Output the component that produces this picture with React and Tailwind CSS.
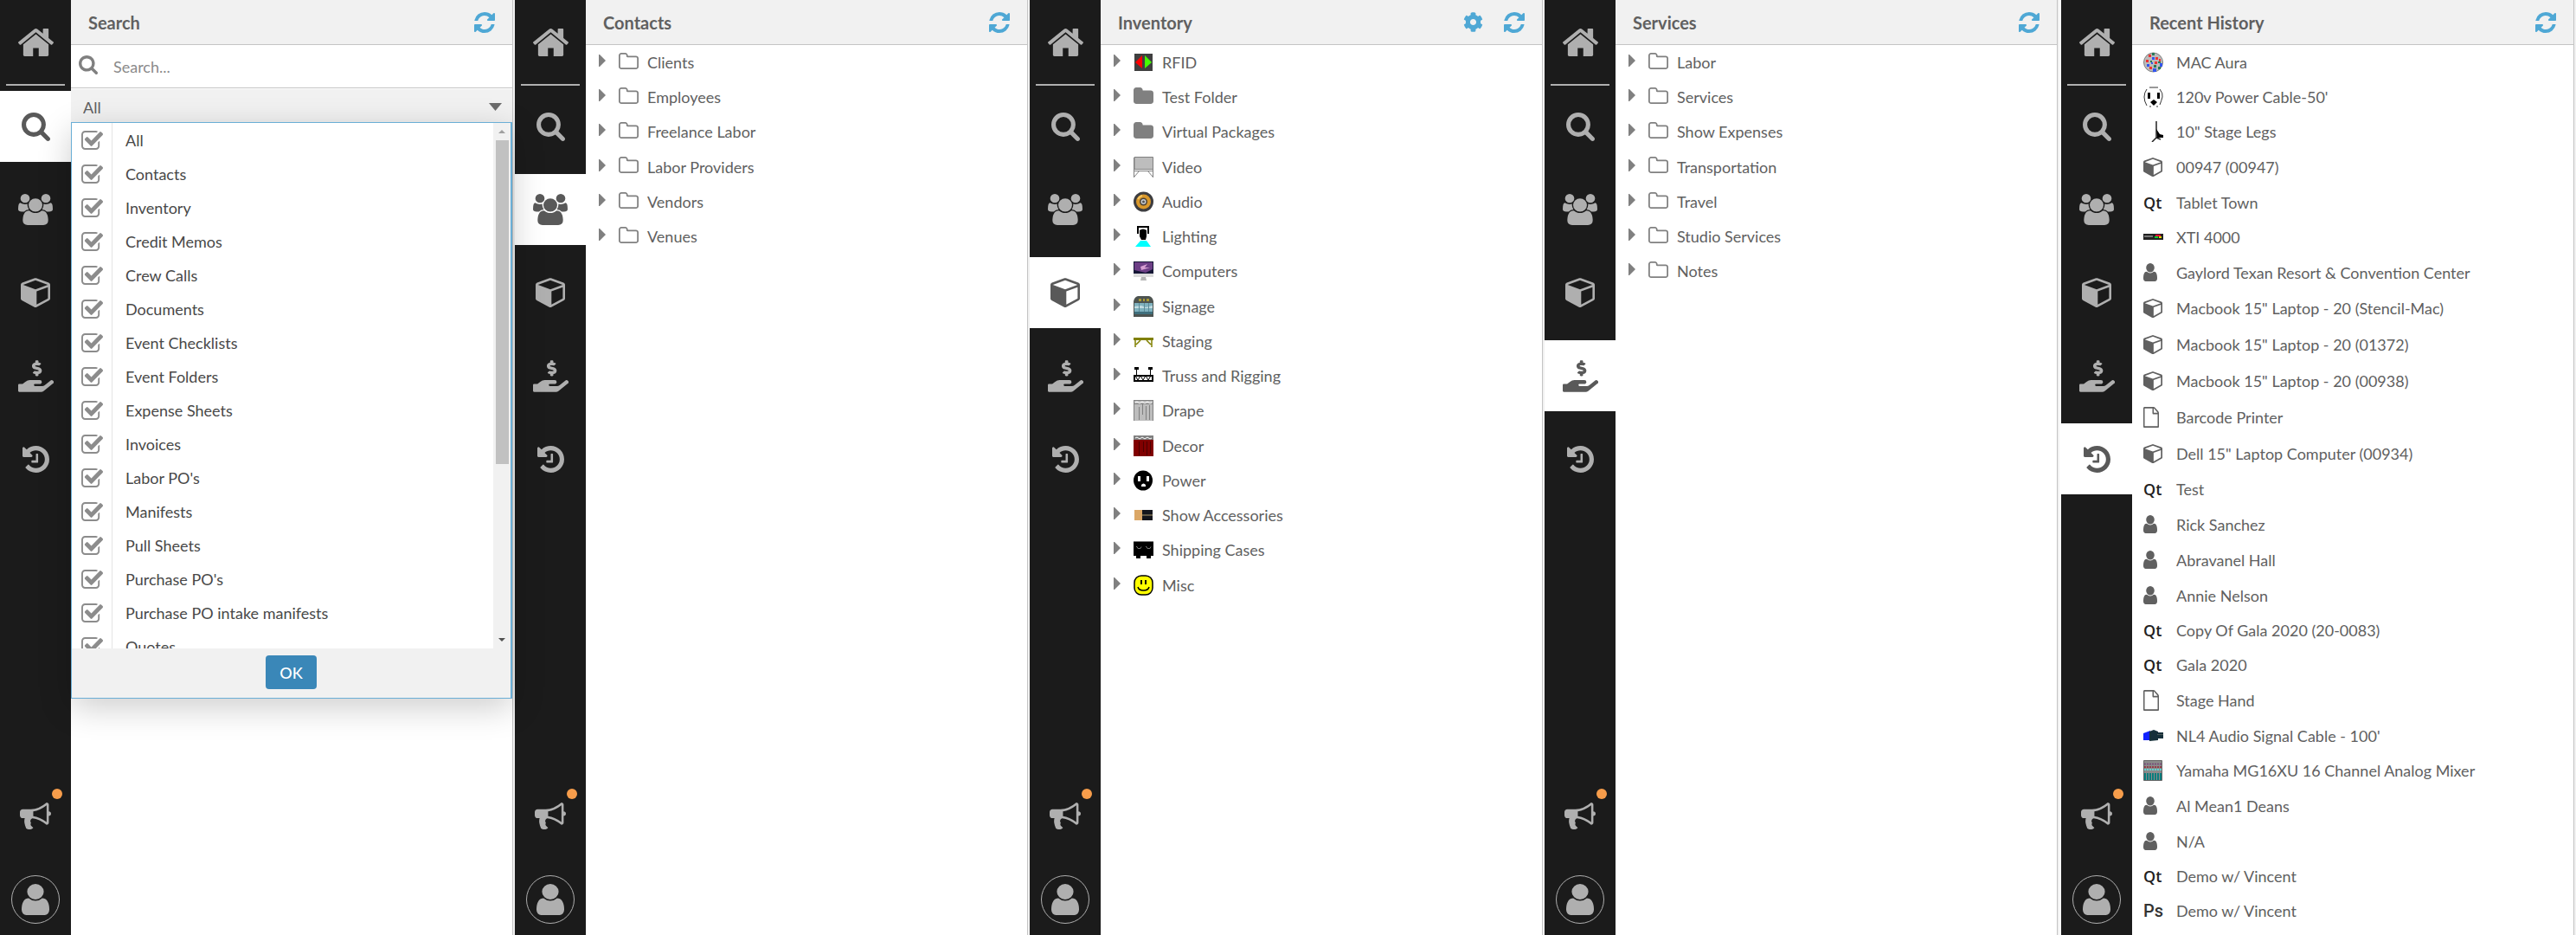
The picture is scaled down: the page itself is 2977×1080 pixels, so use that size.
import { FaHandHoldingUsd, FaCog } from "react-icons/fa";

const glyphs = {
  home: {
    box: "89 253 1614 1283",
    d: "M1472 992v480q0 26-19 45t-45 19h-384v-384h-256v384h-384q-26 0-45-19t-19-45v-480q0-1 .5-3t.5-3l575-474 575 474q1 2 1 6zm223-69l-62 74q-8 9-21 11h-3q-13 0-21-7l-692-577-692 577q-12 8-24 7-13-2-21-11l-62-74q-8-10-7-23.5t11-21.5l719-599q32-26 76-26t76 26l244 204v-195q0-14 9-23t23-9h192q14 0 23 9t9 23v408l219 182q10 8 11 21.5t-7 23.5z",
  },
  search: {
    box: "0 0 1664 1664",
    d: "M1152 704q0-185-131.500-316.500t-316.500-131.500-316.500 131.500-131.500 316.500 131.500 316.500 316.500 131.500 316.500-131.500 131.500-316.500zm512 832q0 52-38 90t-90 38q-54 0-90-38l-343-342q-179 124-399 124-143 0-273.500-55.500t-225-150-150-225-55.500-273.500 55.500-273.500 150-225 225-150 273.500-55.500 273.500 55.500 225 150 150 225 55.500 273.500q0 220-124 399l343 343q37 37 37 90z",
  },
  users: {
    box: "0 0 1920 1792",
    d: "M593 896q-162 5-265 128h-134q-82 0-138-40.5t-56-118.5q0-353 124-353 6 0 43.500 21t97.500 42.500 119 21.500q67 0 133-23-5 37-5 66 0 139 81 256zm1071 637q0 120-73 189.500t-194 69.500h-874q-121 0-194-69.500t-73-189.500q0-53 3.500-103.500t14-109 26.500-108.500 43-97.500 62-81 85.500-53.500 111.500-20q10 0 43 21.500t73 48 107 48 135 21.500 135-21.500 107-48 73-48 43-21.500q61 0 111.500 20t85.500 53.500 62 81 43 97.500 26.500 108.500 14 109 3.500 103.500zm-1024-1277q0 106-75 181t-181 75-181-75-75-181 75-181 181-75 181 75 75 181zm704 384q0 159-112.500 271.500t-271.500 112.500-271.500-112.500-112.500-271.500 112.500-271.500 271.500-112.500 271.500 112.500 112.500 271.500zm576 225q0 78-56 118.500t-138 40.500h-134q-103-123-265-128 81-117 81-256 0-29-5-66 66 23 133 23 59 0 119-21.500t97.500-42.500 43.500-21q124 0 124 353zm-128-609q0 106-75 181t-181 75-181-75-75-181 75-181 181-75 181 75 75 181z",
  },
  cube: {
    box: "0 120 1664 1664",
    d: "M896 1629l640-349v-636l-640 233v752zm-64-865l698-254-698-254-698 254zm832-252v768q0 35-18 65t-49 47l-704 384q-28 16-61 16t-61-16l-704-384q-31-17-49-47t-18-65v-768q0-40 23-73t61-47l704-256q22-8 44-8t44 8l704 256q38 14 61 47t23 73z",
  },
  history: {
    box: "0 128 1536 1536",
    d: "M1536 896q0 156-61 298t-164 245-245 164-298 61q-172 0-327-72.500t-264-204.500q-7-10-6.500-22.500t8.500-20.500l137-138q10-9 25-9 16 2 23 12 73 95 179 147t225 52q104 0 198.500-40.500t163.500-109.500 109.500-163.500 40.500-198.500-40.500-198.500-109.500-163.500-163.500-109.500-198.500-40.500q-98 0-188 35.500t-160 101.500l137 138q31 30 14 69-17 40-59 40h-448q-26 0-45-19t-19-45v-448q0-42 40-59 39-17 69 14l130 129q107-101 244.500-156.500t284.500-55.500q156 0 298 61t245 164 164 245 61 298zm-640-288v448q0 14-9 23t-23 9h-320q-14 0-23-9t-9-23v-64q0-14 9-23t23-9h224v-352q0-14 9-23t23-9h64q14 0 23 9t9 23z",
  },
  bullhorn: {
    box: "0 128 1792 1536",
    d: "M1664 640q53 0 90.500 37.500t37.500 90.500-37.500 90.500-90.500 37.500v384q0 52-38 90t-90 38q-417-347-812-380-58 19-91 66t-31 100.500 40 92.500q-20 33-23 65.500t6 58 33.500 55 48 50 61.500 50.500q-29 58-111.500 83t-168.500 11.500-132-55.500q-7-23-29.500-87.500t-32-94.500-23-89-15-101 3.500-98.500 22-110.500h-122q-66 0-113-47t-47-113v-192q0-66 47-113t113-47h480q435 0 896-384 52 0 90 38t38 90v384zm-128 604v-954q-394 302-768 343v270q377 42 768 341z",
  },
  refresh: {
    box: "128 128 1536 1536",
    d: "M1639 1056q0 5-1 7-64 268-268 434.500t-478 166.500q-146 0-282.500-55t-243.500-157l-129 129q-19 19-45 19t-45-19-19-45v-448q0-26 19-45t45-19h448q26 0 45 19t19 45-19 45l-137 137q71 66 161 102t187 36q134 0 250-65t186-179q11-17 53-117 8-23 30-23h192q13 0 22.500 9.500t9.500 22.500zm25-800v448q0 26-19 45t-45 19h-448q-26 0-45-19t-19-45 19-45l138-138q-148-137-349-137-134 0-250 65t-186 179q-11 17-53 117-8 23-30 23h-199q-13 0-22.500-9.500t-9.500-22.500v-7q65-268 270-434.500t480-166.500q146 0 284 55.500t245 156.500l130-129q19-19 45-19t45 19 19 45z",
  },
  folderOpen: {
    box: "0 128 1664 1408",
    d: "M1536 1312v-704q0-40-28-68t-68-28h-704q-40 0-68-28t-28-68v-64q0-40-28-68t-68-28h-320q-40 0-68 28t-28 68v960q0 40 28 68t68 28h1216q40 0 68-28t28-68zm128-704v704q0 92-66 158t-158 66h-1216q-92 0-158-66t-66-158v-960q0-92 66-158t158-66h320q92 0 158 66t66 158v32h672q92 0 158 66t66 158z",
  },
  folder: {
    box: "0 128 1664 1408",
    d: "M1664 608v704q0 92-66 158t-158 66h-1216q-92 0-158-66t-66-158v-960q0-92 66-158t158-66h320q92 0 158 66t66 158v32h672q92 0 158 66t66 158z",
  },
  file: {
    box: "128 0 1536 1792",
    d: "M1596 380q28 28 48 76t20 88v1152q0 40-28 68t-68 28h-1344q-40 0-68-28t-28-68v-1600q0-40 28-68t68-28h896q40 0 88 20t76 48zm-444-244v376h376q-10-29-22-41l-313-313q-12-12-41-22zm384 1528v-1024h-416q-40 0-68-28t-28-68v-416h-768v1536h1280z",
  },
  user: {
    box: "256 128 1280 1536",
    d: "M1536 1399q0 109-62.500 187t-150.500 78h-854q-88 0-150.500-78t-62.500-187q0-85 8.500-160.500t31.500-152 58.500-131 94-89 134.500-34.500q131 128 313 128t313-128q76 0 134.500 34.500t94 89 58.500 131 31.500 152 8.500 160.500zm-256-887q0 159-112.500 271.500t-271.500 112.500-271.500-112.500-112.500-271.500 112.500-271.500 271.500-112.500 271.500 112.500 112.500 271.500z",
  },
  check: {
    box: "64 128 1663 1408",
    d: "M1472 930v318q0 119-84.500 203.500t-203.500 84.500h-832q-119 0-203.500-84.500t-84.500-203.500v-832q0-119 84.500-203.500t203.500-84.500h832q63 0 117 25 15 7 18 23 3 17-9 29l-49 49q-10 10-23 10-3 0-9-2-23-6-45-6h-832q-66 0-113 47t-47 113v832q0 66 47 113t113 47h832q66 0 113-47t47-113v-254q0-13 9-22l64-64q10-10 23-10 6 0 12 3 20 8 20 29zm231-489l-814 814q-24 24-57 24t-57-24l-430-430q-24-24-24-57t24-57l110-110q24-24 57-24t57 24l263 263 647-647q24-24 57-24t57 24l110 110q24 24 24 57t-24 57z",
  },
};

function Glyph({ name, className }) {
  const { box, d } = glyphs[name];
  return (
    <svg viewBox={box} preserveAspectRatio="none" fill="currentColor" className={className} aria-hidden="true">
      <path d={d} />
    </svg>
  );
}

// Small colour pictures, all on a 24x24 grid
const pictures = {
  rfid: (
    <>
      <path fill="#404040" d="M1 2h21v20H1z" />
      <path fill="#f00" d="M10 4v15L2 12z" />
      <path fill="#4f0" d="M13 4v15l8-7z" />
    </>
  ),
  video: (
    <>
      <path fill="#bdbdbd" stroke="#808080" d="M1 .5h21.500v14H1z" />
      <path fill="none" stroke="#808080" d="M.5 1v23M22.500 1v23M1 16.500h22M7 16l-6 7M16 16l6 7" />
    </>
  ),
  audio: (
    <>
      <circle cx="11.500" cy="12" r="11.500" fill="#3d3d40" />
      <circle cx="11.500" cy="12" r="8.500" fill="#d9982b" />
      <path fill="none" stroke="#f4c766" strokeWidth="2" d="M5 9a8 8 0 0 1 5-4" />
      <circle cx="11.500" cy="12" r="4.500" fill="#4a4136" />
      <circle cx="11.500" cy="12" r="3" fill="#c9ccd0" />
      <circle cx="11.500" cy="12" r="1.500" fill="#555" />
    </>
  ),
  lighting: (
    <>
      <path fill="none" stroke="#000" strokeWidth="2" d="M5 9V1h12v8" />
      <path d="M7 5q4-3 8 0v7l-1 4H9l-2-4z" />
      <path fill="#0ff" d="M8 17h7l5 7H2z" />
    </>
  ),
  computers: (
    <>
      <path fill="#151736" d="M0 1h23v17H0z" />
      <path fill="#6d3f86" d="M1 2h21v8l-8 4-13-3z" />
      <path fill="#d7a0d2" d="M8 7l8-3-3 4 6 0-10 3z" />
      <path fill="#dcdcdc" d="M0 15h23v4H0z" />
      <path fill="#b5b5b5" d="M9 19h5l1 4H8z" />
    </>
  ),
  signage: (
    <>
      <path fill="#4d5350" d="M0 24V6q1-5 5-6h13q4 1 5 6v18z" />
      <path fill="#a99a35" d="M6 3h3v3H6zM11 3h2v3h-2zM15 3h3v3h-3z" />
      <path fill="#7fb2bf" d="M1 8h21v10H1z" />
      <path fill="#c3dde2" d="M1 12l8-1 5 2 8-2v3H1z" />
      <path stroke="#5d8b98" d="M6.500 8v10M12.500 8v10M17.500 8v10" />
      <path fill="#3f6f7d" d="M1 18h21v3H1z" />
    </>
  ),
  staging: (
    <>
      <path fill="#808000" d="M0 8h23v3H0z" />
      <path fill="none" stroke="#808000" strokeWidth="1.500" d="M2 11v8M21 11v8M3 16l5-5M20 16l-5-5" />
    </>
  ),
  truss: (
    <>
      <path d="M1 2h5v3H1zM17 2h5v3h-5z" />
      <path stroke="#000" d="M3.500 4v8M19.500 4v8" />
      <path fill="#fff" stroke="#000" strokeWidth="2" d="M1 12h21v6H1z" />
      <path fill="none" stroke="#000" d="M2 12l3 5 3-5 3 5 3-5 3 5 3-5" />
    </>
  ),
  drape: (
    <>
      <path fill="#bdbdbd" d="M0 0h23v24H0z" />
      <path fill="none" stroke="#808080" d="M0 .5h23M0 4.500h23M.5 0v24M6.500 8v15M10.500 5v12M14.500 7v16M18.500 6v17M22.500 0v24" />
      <path fill="none" stroke="#fff" d="M2 3l2-1 3 2 3-2 3 2 3-2 3 2 2-1" />
    </>
  ),
  decor: (
    <>
      <path fill="#800000" d="M0 5h23v19H0z" />
      <path fill="#808080" d="M0 0h23v5H0z" />
      <path fill="none" stroke="#fff" d="M2 3l2-1 3 2 3-2 3 2 3-2 3 2 2-1" />
      <path fill="none" stroke="#4d0000" d="M6.500 7v16M11.500 7v12M15.500 7v16M19.500 7v14" />
    </>
  ),
  power: (
    <>
      <ellipse cx="11" cy="12" rx="11" ry="11.500" />
      <path fill="#fff" d="M5 7h3v6H5zM15 7h3v6h-3zM9 19v-2q2.500-3 5 0v2z" />
    </>
  ),
  accessories: (
    <>
      <path fill="#dba766" d="M1 6h10v12H1z" />
      <path fill="#15161c" d="M10 6h12v12H10z" />
      <path stroke="#b09a6c" d="M10 12h12" />
    </>
  ),
  cases: (
    <>
      <path d="M0 2h23v17H0zM3 19h5v3H3zM15 19h5v3h-5z" />
      <path fill="none" stroke="#777" d="M0 2.500h23M3 8.500h1l1 2h3l1-2M14 8.500h1l1 2h3l1-2" />
    </>
  ),
  misc: (
    <>
      <rect x="1" y="1" width="21" height="22" rx="8" fill="#ff0" stroke="#000" strokeWidth="1.500" />
      <path d="M8 6h2v5H8zM13 6h2v5h-2z" />
      <path fill="none" stroke="#000" strokeWidth="1.500" d="M5 14q1 4 6.500 4t6.500-4" />
    </>
  ),
  aura: (
    <>
      <circle cx="11.500" cy="12" r="11" fill="#bcbcbc" stroke="#808080" />
      <path fill="#e33" d="M6 3h3v3H6zM3 9h3v3H3zM14 6h3v3h-3zM13 11h3v3h-3zM7 17h3v3H7zM18 8h2v3h-2z" />
      <path fill="#35e" d="M10 6h3v3h-3zM4 14h3v3H4zM11 19h4v4h-4zM19 13h3v4h-3zM9 12h2v2H9z" />
      <path fill="#297a58" d="M10 1h3v3h-3zM8 10h2v2H8zM17 11h3v2h-3zM12 15h3v3h-3zM17 17h3v3h-3z" />
    </>
  ),
  outlet: (
    <>
      <path fill="none" stroke="#333" d="M7 1h10M4 3Q1 7 1 12t3 10M19 3q4 5 3 9t-3 9M7 23h2M15 23h2" />
      <path d="M5 7h3v7H5zM16 7h3v7h-3zM12 15l4 3-4 4-4-4z" />
    </>
  ),
  legs: (
    <>
      <path fill="none" stroke="#222" strokeWidth="1.500" d="M15 0v19l-5 5M15 19l5 2" />
      <path d="M15 9l4 6 4 1v3h-7z" />
    </>
  ),
  amp: (
    <>
      <path fill="#222" d="M0 8h23v7H0z" />
      <path fill="#777" d="M1 10h10v2H1z" />
      <path fill="#0c3" d="M13 11h4v2h-4z" />
      <path fill="#e03" d="M14 9h6v2h-6z" />
      <path fill="#dd0" d="M18 11h3v2h-3z" />
    </>
  ),
  cable: (
    <>
      <path fill="#12f" d="M0 9l8-3v11H0z" />
      <path fill="#16303a" d="M7 7l5-2 5 2v1h6v7h-6v2l-10 1z" />
      <path stroke="#4a5a5a" d="M16 10.500h7" />
    </>
  ),
  mixer: (
    <>
      <path fill="#8a8a8a" stroke="#666" d="M.5.5h21v23H.5z" />
      <path stroke="#747" strokeWidth="1.500" strokeDasharray="2 1" d="M1 4.500h20" />
      <path stroke="#923" strokeWidth="1.500" strokeDasharray="2 1" d="M1 8h20" />
      <path stroke="#5ee" strokeWidth="1.500" strokeDasharray="2 1" d="M1 11h20" />
      <path stroke="#087d7d" strokeWidth="8" strokeDasharray="2 1" d="M1 19h20" />
    </>
  ),
};

function Picture({ name }) {
  return (
    <svg viewBox="0 0 24 24" className="size-6" aria-hidden="true">
      {pictures[name]}
    </svg>
  );
}

const filters = [
  "All",
  "Contacts",
  "Inventory",
  "Credit Memos",
  "Crew Calls",
  "Documents",
  "Event Checklists",
  "Event Folders",
  "Expense Sheets",
  "Invoices",
  "Labor PO's",
  "Manifests",
  "Pull Sheets",
  "Purchase PO's",
  "Purchase PO intake manifests",
  "Quotes",
];

const contacts = ["Clients", "Employees", "Freelance Labor", "Labor Providers", "Vendors", "Venues"];

const services = ["Labor", "Services", "Show Expenses", "Transportation", "Travel", "Studio Services", "Notes"];

const inventory = [
  ["RFID", "rfid"],
  ["Test Folder", "folder"],
  ["Virtual Packages", "folder"],
  ["Video", "video"],
  ["Audio", "audio"],
  ["Lighting", "lighting"],
  ["Computers", "computers"],
  ["Signage", "signage"],
  ["Staging", "staging"],
  ["Truss and Rigging", "truss"],
  ["Drape", "drape"],
  ["Decor", "decor"],
  ["Power", "power"],
  ["Show Accessories", "accessories"],
  ["Shipping Cases", "cases"],
  ["Misc", "misc"],
];

const recent = [
  ["MAC Aura", "aura"],
  ["120v Power Cable-50'", "outlet"],
  ['10" Stage Legs', "legs"],
  ["00947 (00947)", "cube"],
  ["Tablet Town", "Qt"],
  ["XTI 4000", "amp"],
  ["Gaylord Texan Resort & Convention Center", "user"],
  ['Macbook 15" Laptop - 20 (Stencil-Mac)', "cube"],
  ['Macbook 15" Laptop - 20 (01372)', "cube"],
  ['Macbook 15" Laptop - 20 (00938)', "cube"],
  ["Barcode Printer", "file"],
  ['Dell 15" Laptop Computer (00934)', "cube"],
  ["Test", "Qt"],
  ["Rick Sanchez", "user"],
  ["Abravanel Hall", "user"],
  ["Annie Nelson", "user"],
  ["Copy Of Gala 2020 (20-0083)", "Qt"],
  ["Gala 2020", "Qt"],
  ["Stage Hand", "file"],
  ["NL4 Audio Signal Cable - 100'", "cable"],
  ["Yamaha MG16XU 16 Channel Analog Mixer", "mixer"],
  ["Al Mean1 Deans", "user"],
  ["N/A", "user"],
  ["Demo w/ Vincent", "Qt"],
  ["Demo w/ Vincent", "Ps"],
];

const railItems = [
  { id: "search", label: "Search", icon: <Glyph name="search" className="size-[33px]" /> },
  { id: "contacts", label: "Contacts", icon: <Glyph name="users" className="h-9 w-10" /> },
  { id: "inventory", label: "Inventory", icon: <Glyph name="cube" className="size-[34px]" /> },
  { id: "services", label: "Services", icon: <FaHandHoldingUsd className="size-[41px]" /> },
  { id: "history", label: "Recent History", icon: <Glyph name="history" className="size-[31px]" /> },
];

function Rail({ active }) {
  return (
    <nav className="flex w-[82px] shrink-0 flex-col items-center bg-[#1b1b1b] text-[#afafaf]">
      <button aria-label="Home" className="flex h-[97px] w-full items-center justify-center">
        <Glyph name="home" className="h-8 w-[41px]" />
      </button>
      <div className="mb-1.5 h-0.5 w-[68px] bg-[#afafaf]" />
      <div className="flex w-full flex-col gap-3.5">
        {railItems.map((item) => (
          <button
            key={item.id}
            aria-label={item.label}
            className={
              item.id === active
                ? "flex h-[82px] items-center justify-center bg-white text-[#595959]"
                : "flex h-[82px] items-center justify-center"
            }
          >
            {item.icon}
          </button>
        ))}
      </div>
      <button aria-label="Announcements" className="relative mt-auto flex size-[82px] items-center justify-center">
        <Glyph name="bullhorn" className="h-[31px] w-9" />
        <span className="absolute right-2.5 top-2.5 size-3 rounded-full bg-[#f79d4b]" />
      </button>
      <button
        aria-label="Account"
        className="mb-[13px] mt-7 flex size-14 items-center justify-center rounded-full border border-[#afafaf]"
      >
        <Glyph name="user" className="h-9 w-8" />
      </button>
    </nav>
  );
}

function Panel({ title, active, settings, className = "", children }) {
  return (
    <section className={`flex min-w-0 flex-1 bg-[#f1f1f1] pr-0.5 ${className}`}>
      <Rail active={active} />
      <div className="relative flex min-w-0 flex-1 flex-col border-r border-[#c4c4c4] bg-white">
        <header className="flex h-[52px] items-center border-b border-[#c4c4c4] bg-[#f1f1f1] px-5">
          <h2 className="flex-1 text-xl font-bold text-[#606060]">{title}</h2>
          <div className="flex items-center gap-6 text-[#4fa8d5]">
            {settings && (
              <button aria-label="Settings">
                <FaCog className="size-[23px]" />
              </button>
            )}
            <button aria-label="Refresh">
              <Glyph name="refresh" className="size-6" />
            </button>
          </div>
        </header>
        {children}
      </div>
    </section>
  );
}

function Tree({ items }) {
  return (
    <ul>
      {items.map(([label, icon]) => (
        <li key={label} className="flex h-10 items-center pl-[15px] nth-[4n]:h-[41px]">
          <button aria-label={`Expand ${label}`} className="mb-1 mr-[15px]">
            <svg viewBox="0 0 8 14" className="h-3.5 w-2" fill="#808080" aria-hidden="true">
              <path d="M0 0h1l7 7-7 7H0z" />
            </svg>
          </button>
          <span className="mr-[9px] flex w-6 text-[#808080]">
            {glyphs[icon] ? <Glyph name={icon} className="mb-1 h-[19px] w-[23px]" /> : <Picture name={icon} />}
          </span>
          <a href="#">{label}</a>
        </li>
      ))}
    </ul>
  );
}

function RecentIcon({ name }) {
  if (name === "Qt") return <span className="font-['Open_Sans'] text-lg font-semibold leading-5 text-[#222]">Qt</span>;
  if (name === "Ps") return <span className="font-[Roboto] text-xl font-medium leading-5 text-[#333]">Ps</span>;
  if (name === "cube") return <Glyph name="cube" className="size-[22px]" />;
  if (name === "user") return <Glyph name="user" className="h-[21px] w-4" />;
  if (name === "file") return <Glyph name="file" className="h-6 w-[18px]" />;
  return <Picture name={name} />;
}

const recentRowHeight = { cube: "h-[42px]", file: "h-[42px]", user: "h-[41px]" };

function RecentList() {
  return (
    <ul>
      {recent.map(([label, icon], i) => (
        <li key={i} className={`flex items-center pl-[13px] ${recentRowHeight[icon] || "h-10"}`}>
          <span className="flex w-[38px]">
            <RecentIcon name={icon} />
          </span>
          <a href="#">{label}</a>
        </li>
      ))}
    </ul>
  );
}

function FilterMenu() {
  return (
    <div className="absolute inset-x-0 top-full border border-r-2 border-[#6aaed6] bg-[#f1f1f1] shadow-[0_10px_36px_rgba(0,0,0,0.2)]">
      <div className="flex h-[607px] overflow-hidden bg-white text-[#484848]">
        <div className="flex-1">
          {filters.map((label) => (
            <label key={label} className="flex h-[39px]">
              <input type="checkbox" defaultChecked className="peer sr-only" />
              <span className="flex w-[47px] items-center border-r border-[#e4e4e4] pl-[11px] text-[#8c8c8c]">
                <Glyph name="check" className="h-[22px] w-[25px]" />
              </span>
              <span className="flex items-center pl-[15px]">{label}</span>
            </label>
          ))}
        </div>
        <div className="flex w-5 flex-col items-center bg-[#f1f1f1] py-2">
          <svg viewBox="0 0 8 4" className="mb-2 h-1 w-2 shrink-0" fill="#a0a0a0" aria-hidden="true">
            <path d="M4 0l4 4H0z" />
          </svg>
          <div className="h-[374px] w-[15px] bg-[#c1c1c1]" />
          <svg viewBox="0 0 8 4" className="mt-auto h-1 w-2 shrink-0" fill="#505050" aria-hidden="true">
            <path d="M4 4l4-4H0z" />
          </svg>
        </div>
      </div>
      <div className="flex justify-center pb-2.5 pt-2">
        <button className="h-[39px] rounded bg-[#3a87b8] px-4 font-medium text-white">OK</button>
      </div>
    </div>
  );
}

export default function App() {
  return (
    <main className="flex min-h-screen bg-white font-[Lato,sans-serif] text-lg leading-6 text-[#606060]">
      <Panel title="Search" active="search">
        <div className="flex h-[50px] items-center border-b border-[#c4c4c4] pl-[9px]">
          <Glyph name="search" className="mb-1 size-[22px] text-[#808080]" />
          <input
            type="text"
            aria-label="Search"
            placeholder="Search..."
            className="ml-[18px] flex-1 outline-none placeholder:text-[#8a8a8a]"
          />
        </div>
        <div className="relative">
          <select
            aria-label="Search in"
            className="block h-[39px] w-full appearance-none border-t border-white bg-[#f1f1f1] pb-0 pl-3.5 pt-1"
          >
            <option>All</option>
          </select>
          <svg viewBox="0 0 15 9" className="pointer-events-none absolute right-3 top-[17px] h-[9px] w-[15px]" fill="#6c6c6c" aria-hidden="true">
            <path d="M0 0h15L7.500 9z" />
          </svg>
          <FilterMenu />
        </div>
      </Panel>
      <Panel title="Contacts" active="contacts">
        <Tree items={contacts.map((label) => [label, "folderOpen"])} />
      </Panel>
      <Panel title="Inventory" active="inventory" settings>
        <Tree items={inventory} />
      </Panel>
      <Panel title="Services" active="services" className="mr-0.5">
        <Tree items={services.map((label) => [label, "folderOpen"])} />
      </Panel>
      <Panel title="Recent History" active="history">
        <RecentList />
      </Panel>
    </main>
  );
}
